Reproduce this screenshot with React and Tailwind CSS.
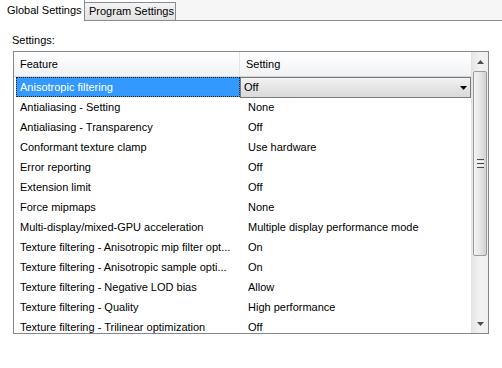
import React from "react";

const rows = [
  ["Antialiasing - Setting", "None"],
  ["Antialiasing - Transparency", "Off"],
  ["Conformant texture clamp", "Use hardware"],
  ["Error reporting", "Off"],
  ["Extension limit", "Off"],
  ["Force mipmaps", "None"],
  ["Multi-display/mixed-GPU acceleration", "Multiple display performance mode"],
  ["Texture filtering - Anisotropic mip filter opt...", "On"],
  ["Texture filtering - Anisotropic sample opti...", "On"],
  ["Texture filtering - Negative LOD bias", "Allow"],
  ["Texture filtering - Quality", "High performance"],
  ["Texture filtering - Trilinear optimization", "Off"],
];

function Tri({ up, color = "#4d4d4d", w = 7, h = 4 }) {
  return (
    <svg width={w} height={h} viewBox={`0 0 ${w} ${h}`}>
      {up ? (
        <polygon points={`0,${h} ${w},${h} ${w / 2},0`} fill={color} />
      ) : (
        <polygon points={`0,0 ${w},0 ${w / 2},${h}`} fill={color} />
      )}
    </svg>
  );
}

export default function App() {
  return (
    <div className="w-[502px] h-[368px] bg-white overflow-hidden font-['Liberation_Sans',Arial,sans-serif] text-[11px] text-black">
      <div className="flex h-[21px]">
        <div className="w-[85px] h-[21px] bg-white border-r border-[#898c95] pl-[7px] leading-[20px]">
          Global Settings
        </div>
        <div className="mt-[2px] w-[91px] h-[19px] border-t border-r border-b border-[#898c95] bg-gradient-to-b from-[#f4f4f4] to-[#e2e2e2] pl-[4px] leading-[17px]">
          Program Settings
        </div>
        <div className="flex-1 border-b border-[#898c95] bg-[#f6f6f6]"></div>
      </div>

      <div className="mt-[13px] pl-[12px] leading-[13px]">Settings:</div>

      <div className="mt-[4px] ml-[13px] w-[476px] h-[283px] border border-[#828790] flex">
        <div className="w-[457px] flex flex-col overflow-hidden">
          <div className="h-[25px] shrink-0 flex bg-gradient-to-b from-white to-[#f1f2f4] border-b border-[#d5d5d5]">
            <div className="w-[226px] border-r border-[#e3e4e6] pl-[6px] leading-[25px]">Feature</div>
            <div className="flex-1 pl-[6px] leading-[25px]">Setting</div>
          </div>

          <div className="h-[20px] shrink-0 flex">
            <div className="w-[226px] pl-[2px]">
              <div className="h-[20px] bg-[#3399ff] border border-dotted border-[#222] text-white pl-[3px] leading-[18px]">
                Anisotropic filtering
              </div>
            </div>
            <div className="flex-1 h-[21px] border border-[#7a7a7a] bg-gradient-to-b from-[#f2f2f2] to-[#d9d9d9] flex items-center justify-between pl-[3px] pr-[3px]">
              <span className="leading-[19px]">Off</span>
              <Tri color="#000" w={7} h={4} />
            </div>
          </div>

          {rows.map(([f, s], i) => (
            <div key={i} className="h-[20px] shrink-0 flex leading-[20px]">
              <div className="w-[226px] pl-[6px] whitespace-nowrap overflow-hidden">{f}</div>
              <div className="flex-1 pl-[8px] whitespace-nowrap overflow-hidden">{s}</div>
            </div>
          ))}
        </div>

        <div className="w-[17px] flex flex-col bg-gradient-to-r from-[#e6e6e6] via-[#f2f2f2] to-[#efefef] border-l border-[#e2e2e2]">
          <div className="h-[19px] flex items-center justify-center">
            <Tri up w={7} h={4} />
          </div>
          <div className="h-[185px] mx-[1px] rounded-[2px] border border-[#9b9b9b] bg-gradient-to-r from-[#f3f3f3] via-[#e6e6e6] to-[#d2d2d2] flex flex-col items-center justify-center gap-[1px]">
            <div className="w-[7px] h-[1px] bg-[#4a4a4a]"></div>
            <div className="w-[7px] h-[1px] bg-[#fafafa]"></div>
            <div className="w-[7px] h-[1px] bg-[#4a4a4a]"></div>
            <div className="w-[7px] h-[1px] bg-[#fafafa]"></div>
            <div className="w-[7px] h-[1px] bg-[#4a4a4a]"></div>
          </div>
          <div className="flex-1"></div>
          <div className="h-[19px] flex items-center justify-center">
            <Tri w={7} h={4} />
          </div>
        </div>
      </div>
    </div>
  );
}
